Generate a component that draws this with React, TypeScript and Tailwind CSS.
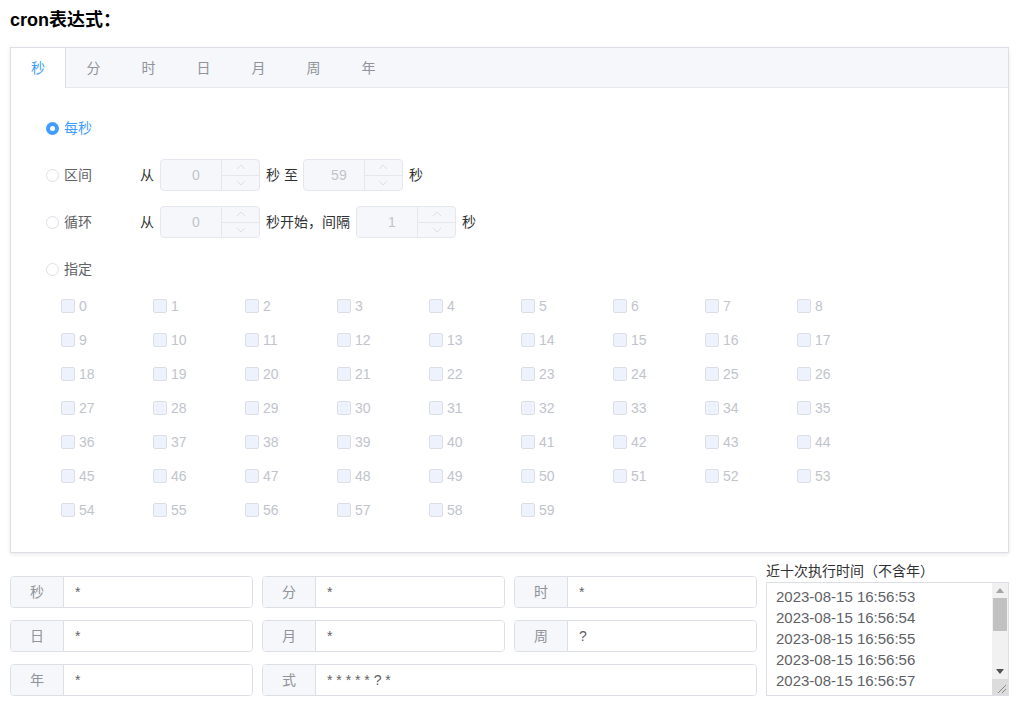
import React from "react";

const FONT = "font-['Liberation_Sans','Noto_Sans_CJK_SC',sans-serif]";

function Spin({ v }: { v: string }) {
  return (
    <div className="flex w-[100px] h-[32px] border border-[#e4e7ed] bg-[#f5f7fa] rounded-[4px]">
      <div className="flex-1 flex items-center justify-center pl-[10px] text-[#c0c4cc] text-[14px]">{v}</div>
      <div className="w-[38px] border-l border-[#e4e7ed] flex flex-col">
        <div className="flex-1 border-b border-[#e4e7ed] flex items-center justify-center">
          <svg width="10" height="6" viewBox="0 0 10 6">
            <path d="M1 5 L5 1 L9 5" fill="none" stroke="#dcdfe6" strokeWidth="1" />
          </svg>
        </div>
        <div className="flex-1 flex items-center justify-center">
          <svg width="10" height="6" viewBox="0 0 10 6">
            <path d="M1 1 L5 5 L9 1" fill="none" stroke="#dcdfe6" strokeWidth="1" />
          </svg>
        </div>
      </div>
    </div>
  );
}

function Radio({ label, checked }: { label: string; checked?: boolean }) {
  return (
    <div className="w-[94px] flex items-center">
      {checked ? (
        <span className="w-[13px] h-[13px] rounded-full bg-[#409eff] flex items-center justify-center">
          <span className="w-[5px] h-[5px] rounded-full bg-white" />
        </span>
      ) : (
        <span className="w-[13px] h-[13px] rounded-full border border-[#dcdfe6] bg-white" />
      )}
      <span className={"ml-[5px] text-[14px] leading-[20px] " + (checked ? "text-[#409eff]" : "text-[#606266]")}>
        {label}
      </span>
    </div>
  );
}

function Group({ label, value, span }: { label: string; value: string; span?: boolean }) {
  return (
    <div className={"flex h-[32px] border border-[#dcdfe6] rounded-[4px] overflow-hidden " + (span ? "col-span-2" : "")}>
      <div className="w-[53px] bg-[#f5f7fa] border-r border-[#dcdfe6] flex items-center justify-center text-[#909399] text-[14px]">
        {label}
      </div>
      <div className="flex-1 flex items-center pl-[11px] text-[#606266] text-[14px] bg-white">{value}</div>
    </div>
  );
}

export default function App() {
  const tabs = ["秒", "分", "时", "日", "月", "周", "年"];
  const nums = Array.from({ length: 60 }, (_, i) => i);
  const times = [
    "2023-08-15 16:56:53",
    "2023-08-15 16:56:54",
    "2023-08-15 16:56:55",
    "2023-08-15 16:56:56",
    "2023-08-15 16:56:57",
  ];
  return (
    <div className={"w-[1024px] h-[710px] bg-white px-[10px] overflow-hidden text-[#303133] " + FONT}>
      <div className="pt-[8px] text-[18px] leading-[24px] font-bold text-black">cron表达式：</div>

      <div className="w-[999px] mt-[15px] border border-[#dcdfe6] bg-white shadow-[0_2px_4px_rgba(0,0,0,0.06),0_0_6px_rgba(0,0,0,0.03)]">
        <div className="flex h-[40px] bg-[#f5f7fa] border-b border-[#e4e7ed]">
          {tabs.map((t, i) => (
            <div
              key={t}
              className={
                "w-[55px] h-[40px] flex items-center justify-center text-[14px] " +
                (i === 0 ? "bg-white text-[#409eff] border-r border-[#dcdfe6]" : "text-[#909399]")
              }
            >
              {t}
            </div>
          ))}
        </div>

        <div className="pl-[35px] pt-[24px] pb-[32px]">
          <div className="flex items-center h-[32px] mb-[15px]">
            <Radio label="每秒" checked />
          </div>
          <div className="flex items-center h-[32px] mb-[15px] text-[14px]">
            <Radio label="区间" />
            <span>从</span>
            <span className="ml-[6px]"><Spin v="0" /></span>
            <span className="ml-[6px]">秒 至</span>
            <span className="ml-[5px]"><Spin v="59" /></span>
            <span className="ml-[6px]">秒</span>
          </div>
          <div className="flex items-center h-[32px] mb-[15px] text-[14px]">
            <Radio label="循环" />
            <span>从</span>
            <span className="ml-[6px]"><Spin v="0" /></span>
            <span className="ml-[6px]">秒开始，间隔</span>
            <span className="ml-[6px]"><Spin v="1" /></span>
            <span className="ml-[6px]">秒</span>
          </div>
          <div className="flex items-center h-[32px]">
            <Radio label="指定" />
          </div>

          <div className="mt-[11px] ml-[15px] grid grid-cols-[repeat(9,92px)] gap-y-[14px]">
            {nums.map((n) => (
              <div key={n} className="h-[20px] flex items-center">
                <span className="w-[14px] h-[14px] border border-[#dcdfe6] bg-[#edf2fc] rounded-[2px]" />
                <span className="ml-[4px] text-[14px] text-[#c0c4cc]">{n}</span>
              </div>
            ))}
          </div>
        </div>
      </div>

      <div className="mt-[8px] flex gap-[9px]">
        <div className="w-[747px] pt-[15px] grid grid-cols-3 gap-x-[9px] gap-y-[12px]">
          <Group label="秒" value="*" />
          <Group label="分" value="*" />
          <Group label="时" value="*" />
          <Group label="日" value="*" />
          <Group label="月" value="*" />
          <Group label="周" value="?" />
          <Group label="年" value="*" />
          <Group label="式" value="* * * * * ? *" span />
        </div>
        <div className="w-[243px]">
          <div className="h-[20px] leading-[20px] text-[14px] text-[#303133]">近十次执行时间（不含年）</div>
          <div className="mt-[1px] h-[114px] border border-[#dcdfe6] flex bg-white">
            <div className="flex-1 overflow-hidden pl-[9px] pt-[3px] text-[15px] leading-[21px] text-[#606266]">
              {times.map((t) => (
                <div key={t}>{t}</div>
              ))}
            </div>
            <div className="w-[16px] bg-[#f1f1f1] flex flex-col">
              <div className="h-[15px] flex items-center justify-center">
                <svg width="8" height="5" viewBox="0 0 8 5">
                  <path d="M0 5 L4 0 L8 5 Z" fill="#a3a3a3" />
                </svg>
              </div>
              <div className="h-[33px] mx-[1px] bg-[#c1c1c1]" />
              <div className="flex-1" />
              <div className="h-[15px] flex items-center justify-center">
                <svg width="8" height="5" viewBox="0 0 8 5">
                  <path d="M0 0 L8 0 L4 5 Z" fill="#505050" />
                </svg>
              </div>
              <div className="h-[16px] bg-[#dcdcdc] flex items-end justify-end">
                <svg width="16" height="16" viewBox="0 0 16 16">
                  <path d="M14 6 L6 14 M14 10 L10 14" stroke="#8a8a8a" strokeWidth="1" />
                </svg>
              </div>
            </div>
          </div>
        </div>
      </div>
    </div>
  );
}
